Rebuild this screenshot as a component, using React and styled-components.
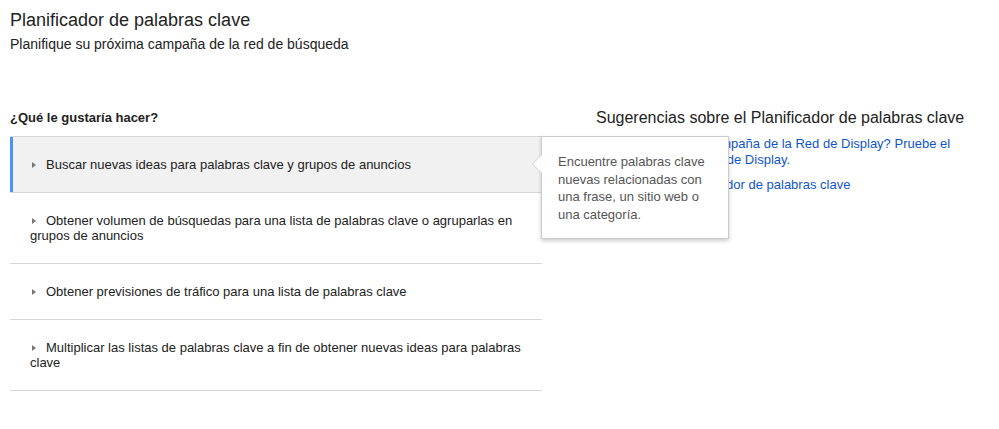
import styled, { createGlobalStyle } from "styled-components";

const GlobalStyle = createGlobalStyle`
  body {
    margin: 0;
    background: #fff;
    font-family: "Liberation Sans", Arial, sans-serif;
    color: #222;
  }
`;

const Page = styled.div`
  padding: 8px 10px;
`;

const Title = styled.h1`
  margin: 0;
  font-size: 18px;
  font-weight: normal;
  line-height: 24px;
  color: #222;
`;

const Subtitle = styled.p`
  margin: 3px 0 0 0;
  font-size: 14px;
  line-height: 18px;
  color: #222;
`;

const Columns = styled.div`
  display: flex;
  align-items: flex-start;
  gap: 54px;
  margin-top: 56px;
`;

const LeftColumn = styled.div`
  width: 532px;
  flex-shrink: 0;
`;

const Question = styled.h2`
  margin: 0 0 9px 0;
  font-size: 13px;
  font-weight: bold;
  line-height: 18px;
  color: #222;
`;

const OptionList = styled.div`
  position: relative;
  border-top: 1px solid #d6d6d6;
`;

const Option = styled.div`
  position: relative;
  padding: 20px 20px 20px 20px;
  font-size: 13px;
  line-height: 15px;
  color: #222;
  border-bottom: 1px solid #d6d6d6;
  background: ${(p) => (p.$active ? "#f1f1f1" : "#fff")};
  box-shadow: ${(p) => (p.$active ? "inset 3px 0 0 #4d90fe" : "none")};
  cursor: pointer;
`;

const Arrow = styled.span`
  display: inline-block;
  width: 0;
  height: 0;
  margin: 0 10px 1px 2px;
  border-left: 4px solid #777;
  border-top: 3.5px solid transparent;
  border-bottom: 3.5px solid transparent;
  vertical-align: middle;
`;

const Tooltip = styled.div`
  position: absolute;
  left: 531px;
  top: -1px;
  width: 154px;
  padding: 16px 16px 15px 16px;
  background: #fff;
  border: 1px solid #ccc;
  box-shadow: 0 2px 4px rgba(0, 0, 0, 0.2);
  font-size: 13px;
  line-height: 17.5px;
  color: #555;
  z-index: 2;

  &::before,
  &::after {
    content: "";
    position: absolute;
    width: 0;
    height: 0;
    border-top: 10px solid transparent;
    border-bottom: 10px solid transparent;
  }
  &::before {
    left: -10px;
    top: 17px;
    border-right: 10px solid #ccc;
  }
  &::after {
    left: -9px;
    top: 17px;
    border-right: 10px solid #fff;
  }
`;

const RightColumn = styled.div`
  width: 380px;
`;

const SideTitle = styled.h2`
  margin: -1px 0 8px 0;
  font-size: 16px;
  font-weight: normal;
  line-height: 20px;
  color: #222;
`;

const TipLink = styled.a`
  display: block;
  margin-bottom: 10px;
  font-size: 13px;
  line-height: 15.5px;
  color: #15c;
  text-decoration: none;
`;

const options = [
  "Buscar nuevas ideas para palabras clave y grupos de anuncios",
  "Obtener volumen de búsquedas para una lista de palabras clave o agruparlas en grupos de anuncios",
  "Obtener previsiones de tráfico para una lista de palabras clave",
  "Multiplicar las listas de palabras clave a fin de obtener nuevas ideas para palabras clave",
];

const App = () => {
  return (
    <Page>
      <GlobalStyle />
      <Title>Planificador de palabras clave</Title>
      <Subtitle>Planifique su próxima campaña de la red de búsqueda</Subtitle>
      <Columns>
        <LeftColumn>
          <Question>¿Qué le gustaría hacer?</Question>
          <OptionList>
            {options.map((text, i) => (
              <Option key={i} $active={i === 0}>
                <Arrow />
                {text}
              </Option>
            ))}
            <Tooltip>
              Encuentre palabras clave nuevas relacionadas con una frase, un
              sitio web o una categoría.
            </Tooltip>
          </OptionList>
        </LeftColumn>
        <RightColumn>
          <SideTitle>Sugerencias sobre el Planificador de palabras clave</SideTitle>
          <TipLink href="#">
            ¿Planea crear una campaña de la Red de Display? Pruebe el
            Planificador de la Red de Display.
          </TipLink>
          <TipLink href="#">Cómo usar el Planificador de palabras clave</TipLink>
        </RightColumn>
      </Columns>
    </Page>
  );
};

export default App;
